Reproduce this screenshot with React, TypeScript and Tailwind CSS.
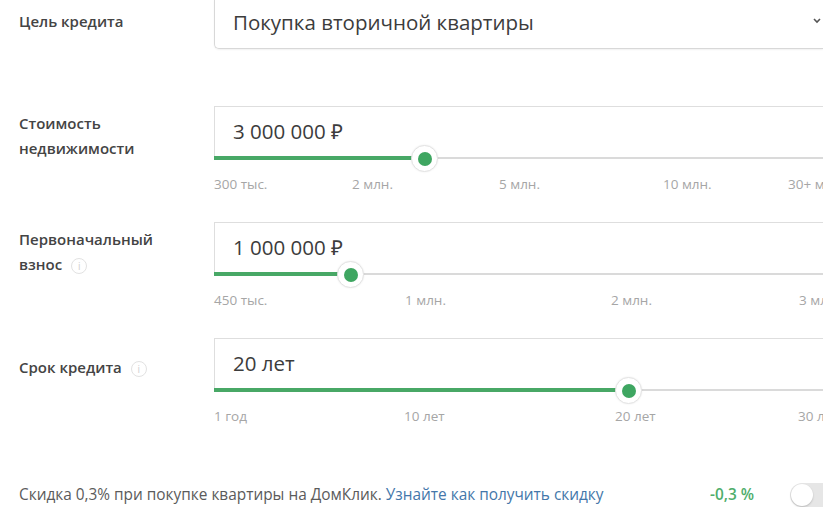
import { ReactNode } from "react";

interface SliderRowProps {
  label: ReactNode;
  labelPad: string;
  value: string;
  thumb: number;
  ticks: { text: string; left: number }[];
}

function InfoIcon() {
  return (
    <span className="inline-flex items-center justify-center w-[16px] h-[16px] ml-[9px] rounded-full border border-[#e2e2e2] text-[10px] leading-none text-[#cfcfcf] font-normal align-middle">
      i
    </span>
  );
}

function SliderRow({ label, labelPad, value, thumb, ticks }: SliderRowProps) {
  return (
    <div className="flex h-[116px]">
      {/* Label */}
      <div
        className={`w-[214px] shrink-0 pl-[19px] ${labelPad} text-[15px] leading-[25px] font-semibold text-[#444]`}
      >
        {label}
      </div>

      {/* Input + slider */}
      <div className="w-[609px] shrink-0">
        <div className="h-[50px] border-l border-t border-[#dedede] flex items-center pl-[18px] text-[20.5px] text-[#3c3c3c]">
          {value}
        </div>
        <div className="relative h-[4px]">
          <div className="absolute left-0 right-0 top-[1px] h-[2px] bg-[#dadada]" />
          <div
            className="absolute left-0 top-0 h-[4px] bg-[#48a866]"
            style={{ width: thumb }}
          />
          <div
            className="absolute top-[-11px] w-[27px] h-[27px] -ml-[13px] rounded-full bg-white border border-[#e3e3e3] flex items-center justify-center shadow-[0_0_2px_rgba(0,0,0,0.08)]"
            style={{ left: thumb }}
          >
            <div className="w-[14px] h-[14px] rounded-full bg-[#3ea661]" />
          </div>
        </div>
        <div className="relative h-[30px]">
          {ticks.map((t) => (
            <span
              key={t.text}
              className="absolute top-[15px] text-[13.5px] leading-[18px] text-[#a6a6a6] whitespace-nowrap"
              style={{ left: t.left }}
            >
              {t.text}
            </span>
          ))}
        </div>
      </div>
    </div>
  );
}

export default function App() {
  return (
    <div className="w-[835px] h-[532px] bg-white overflow-hidden font-['Open_Sans',sans-serif]">
      <div className="w-[823px] overflow-hidden">
        {/* Loan purpose */}
        <div className="flex h-[49px]">
          <div className="w-[214px] shrink-0 pl-[19px] pt-[9px] text-[15px] leading-[25px] font-semibold text-[#444]">
            Цель кредита
          </div>
          <div className="w-[609px] shrink-0 h-[49px] border-l border-b border-[#d8d8d8] rounded-bl-[5px] shadow-[0_1px_2px_rgba(0,0,0,0.06)] flex items-center justify-between pl-[18px] pb-[4px] text-[20.5px] text-[#3c3c3c]">
            <span>Покупка вторичной квартиры</span>
            <svg
              className="w-[10px] h-[10px] mr-[1px] mb-[3px] text-[#555]"
              viewBox="0 0 10 10"
              fill="none"
              stroke="currentColor"
              strokeWidth={1.6}
            >
              <path d="M2 3l3 3 3-3" />
            </svg>
          </div>
        </div>

        <div className="h-[57px]" />

        <SliderRow
          label={
            <>
              Стоимость
              <br />
              недвижимости
            </>
          }
          labelPad="pt-[5px]"
          value="3 000 000 ₽"
          thumb={210}
          ticks={[
            { text: "300 тыс.", left: 0 },
            { text: "2 млн.", left: 138 },
            { text: "5 млн.", left: 285 },
            { text: "10 млн.", left: 449 },
            { text: "30+ млн.", left: 574 },
          ]}
        />

        <SliderRow
          label={
            <>
              Первоначальный
              <br />
              взнос
              <InfoIcon />
            </>
          }
          labelPad="pt-[5px]"
          value="1 000 000 ₽"
          thumb={136}
          ticks={[
            { text: "450 тыс.", left: 0 },
            { text: "1 млн.", left: 191 },
            { text: "2 млн.", left: 397 },
            { text: "3 млн.", left: 585 },
          ]}
        />

        <SliderRow
          label={
            <>
              Срок кредита
              <InfoIcon />
            </>
          }
          labelPad="pt-[17px]"
          value="20 лет"
          thumb={414}
          ticks={[
            { text: "1 год", left: 0 },
            { text: "10 лет", left: 190 },
            { text: "20 лет", left: 401 },
            { text: "30 лет", left: 584 },
          ]}
        />

        {/* Discount */}
        <div className="flex items-center h-[24px] mt-[29px] pl-[19px] text-[15.4px] text-[#5b5b5b]">
          <span className="w-[691px] shrink-0 whitespace-nowrap">
            Скидка 0,3% при покупке квартиры на ДомКлик.{" "}
            <span className="text-[#4477aa]">Узнайте как получить скидку</span>
          </span>
          <span className="w-[80px] shrink-0 font-semibold text-[#4fae6c]">-0,3 %</span>
          <div className="w-[46px] h-[24px] shrink-0 rounded-full bg-[#e6e6e6] p-[1px]">
            <div className="w-[22px] h-[22px] rounded-full bg-white shadow-[0_1px_2px_rgba(0,0,0,0.2)]" />
          </div>
        </div>
      </div>
    </div>
  );
}
